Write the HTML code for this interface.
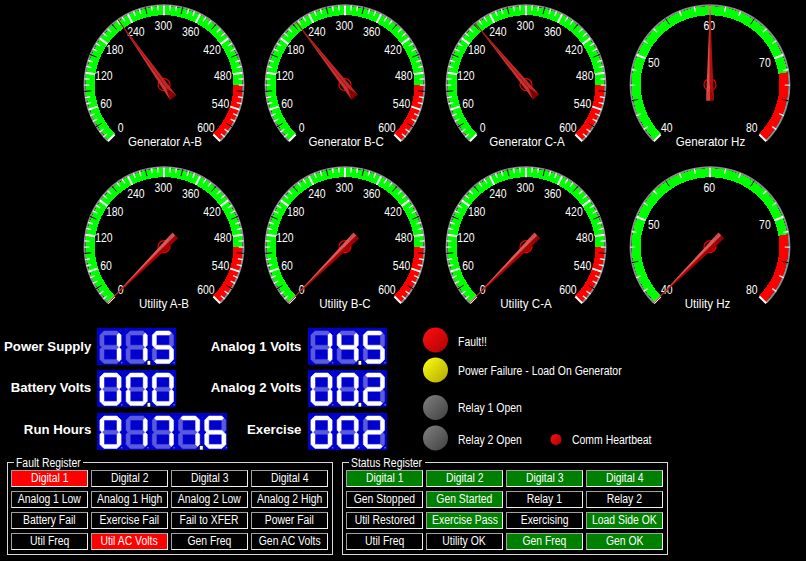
<!DOCTYPE html>
<html><head><meta charset="utf-8"><style>
html,body{margin:0;padding:0;background:#000;}
body{width:806px;height:561px;position:relative;overflow:hidden;font-family:"Liberation Sans", sans-serif;color:#fff;}
.lb{position:absolute;white-space:nowrap;line-height:14px;text-align:right;}
.lb span{display:inline-block;transform:scaleX(1.1);transform-origin:right center;}
.tx{position:absolute;white-space:nowrap;line-height:14px;}
.tx span{display:inline-block;transform:scaleX(0.87);transform-origin:left center;}
.grp{position:absolute;box-sizing:border-box;border:1px solid #d8d8d8;}
.gt{position:absolute;background:#000;padding:0 2px;font-size:12px;line-height:12px;height:12px;white-space:nowrap;width:68px;overflow:visible}
.gt span{display:inline-block;transform:scaleX(0.866);transform-origin:left center;}
.cell{position:absolute;box-sizing:border-box;width:77px;height:17px;border-top:1px solid #a0a0a0;border-left:1px solid #a0a0a0;border-right:1px solid #f0f0f0;border-bottom:1px solid #f0f0f0;text-align:center;font-size:12px;line-height:14px;white-space:nowrap;overflow:visible;}
.cell span{display:inline-block;transform:scaleX(0.866);transform-origin:center center;}
</style></head><body>
<svg width="806" height="561" style="position:absolute;left:0;top:0" font-family="'Liberation Sans', sans-serif" font-size="12" fill="#fff" text-anchor="middle">
<path d="M107.86 140.74 A79.4 79.4 0 1 1 220.14 140.74" fill="none" stroke="#8c8c8c" stroke-width="2.0"/>
<path d="M108.56 140.04 A78.4 78.4 0 1 1 242.4 84.6 L233.4 84.6 A69.4 69.4 0 1 0 114.93 133.67 Z" fill="#00ff00" shape-rendering="crispEdges"/>
<path d="M242.4 84.6 A78.4 78.4 0 0 1 219.44 140.04 L213.07 133.67 A69.4 69.4 0 0 0 233.4 84.6 Z" fill="#ff0000" shape-rendering="crispEdges"/>
<path d="M107.12 133.68L103.32 136.93M103.49 129.07L99.44 132.01M97.35 119.06L92.9 121.33M94.89 113.72L90.27 115.64M91.27 102.56L86.4 103.73M90.12 96.8L85.18 97.58M89.2 85.1L84.2 85.1M89.43 79.23L84.45 78.84M91.27 67.64L86.4 66.47M92.86 61.99L88.11 60.44M97.35 51.14L92.9 48.87M100.22 46.02L95.96 43.4M107.12 36.52L103.32 33.27M111.11 32.21L107.57 28.67M120.03 24.59L117.09 20.54M124.92 21.32L122.3 17.06M135.38 15.99L133.46 11.37M140.89 13.96L139.34 9.21M152.3 11.22L151.52 6.28M158.13 10.53L157.74 5.55M169.87 10.53L170.26 5.55M175.7 11.22L176.48 6.28M187.11 13.96L188.66 9.21M192.62 15.99L194.54 11.37M203.08 21.32L205.7 17.06M207.97 24.59L210.91 20.54M216.89 32.21L220.43 28.67M220.88 36.52L224.68 33.27M227.78 46.02L232.04 43.4M230.65 51.14L235.1 48.87M235.14 61.99L239.89 60.44M236.73 67.64L241.6 66.47M238.57 79.23L243.55 78.84M238.8 85.1L243.8 85.1M237.88 96.8L242.82 97.58M236.73 102.56L241.6 103.73M233.11 113.72L237.73 115.64M230.65 119.06L235.1 121.33M224.51 129.07L228.56 132.01M220.88 133.68L224.68 136.93" stroke="rgba(255,255,255,0.9)" stroke-width="1.4"/>
<path d="M101.76 123.24L95.79 126.9M91.23 90.83L84.25 91.38M96.56 57.16L90.09 54.49M116.59 29.59L112.04 24.27M146.96 14.12L145.32 7.31M181.04 14.12L182.68 7.31M211.41 29.59L215.96 24.27M231.44 57.16L237.91 54.49M236.77 90.83L243.75 91.38M226.24 123.24L232.21 126.9" stroke="#000" stroke-width="1.0"/>
<path d="M114.64 134.46L107.86 141.24M97.62 106.67L88.49 109.64M95.06 74.18L85.58 72.68M107.53 44.07L99.76 38.43M132.31 22.91L127.95 14.35M164 15.3L164 5.7M195.69 22.91L200.05 14.35M220.47 44.07L228.24 38.43M232.94 74.18L242.42 72.68M230.38 106.67L239.51 109.64M213.36 134.46L220.14 141.24" stroke="#fff" stroke-width="2.0"/>
<text transform="translate(120.73 131.93) scale(0.87 1)">0</text>
<text transform="translate(106.05 108.04) scale(0.87 1)">60</text>
<text transform="translate(103.84 80.11) scale(0.87 1)">120</text>
<text transform="translate(114.6 54.23) scale(0.87 1)">180</text>
<text transform="translate(135.97 36.04) scale(0.87 1)">240</text>
<text transform="translate(163.3 29.5) scale(0.87 1)">300</text>
<text transform="translate(190.63 36.04) scale(0.87 1)">360</text>
<text transform="translate(212 54.23) scale(0.87 1)">420</text>
<text transform="translate(222.76 80.11) scale(0.87 1)">480</text>
<text transform="translate(220.55 108.04) scale(0.87 1)">540</text>
<text transform="translate(205.87 131.93) scale(0.87 1)">600</text>
<text x="165" y="145.7" transform="translate(165 0) scale(0.966 1) translate(-165 0)">Generator A-B</text>
<circle cx="164" cy="84.7" r="6" fill="none" stroke="#f00000" stroke-width="1.2"/>
<polygon points="165.73,87.15 173.23,97.77 169.96,100.08" fill="#910000"/>
<polygon points="165.73,87.15 173.23,97.77 176.5,95.46" fill="#880000"/>
<polygon points="117.85,19.36 166.31,87.97 169.96,100.08" fill="#c93434"/>
<polygon points="117.85,19.36 166.31,87.97 176.5,95.46" fill="#c02525"/>
<line x1="164" y1="84.7" x2="117.85" y2="19.36" stroke="#b01414" stroke-width="1"/>
<path d="M288.86 140.74 A79.4 79.4 0 1 1 401.14 140.74" fill="none" stroke="#8c8c8c" stroke-width="2.0"/>
<path d="M289.56 140.04 A78.4 78.4 0 1 1 423.4 84.6 L414.4 84.6 A69.4 69.4 0 1 0 295.93 133.67 Z" fill="#00ff00" shape-rendering="crispEdges"/>
<path d="M423.4 84.6 A78.4 78.4 0 0 1 400.44 140.04 L394.07 133.67 A69.4 69.4 0 0 0 414.4 84.6 Z" fill="#ff0000" shape-rendering="crispEdges"/>
<path d="M288.12 133.68L284.32 136.93M284.49 129.07L280.44 132.01M278.35 119.06L273.9 121.33M275.89 113.72L271.27 115.64M272.27 102.56L267.4 103.73M271.12 96.8L266.18 97.58M270.2 85.1L265.2 85.1M270.43 79.23L265.45 78.84M272.27 67.64L267.4 66.47M273.86 61.99L269.11 60.44M278.35 51.14L273.9 48.87M281.22 46.02L276.96 43.4M288.12 36.52L284.32 33.27M292.11 32.21L288.57 28.67M301.03 24.59L298.09 20.54M305.92 21.32L303.3 17.06M316.38 15.99L314.46 11.37M321.89 13.96L320.34 9.21M333.3 11.22L332.52 6.28M339.13 10.53L338.74 5.55M350.87 10.53L351.26 5.55M356.7 11.22L357.48 6.28M368.11 13.96L369.66 9.21M373.62 15.99L375.54 11.37M384.08 21.32L386.7 17.06M388.97 24.59L391.91 20.54M397.89 32.21L401.43 28.67M401.88 36.52L405.68 33.27M408.78 46.02L413.04 43.4M411.65 51.14L416.1 48.87M416.14 61.99L420.89 60.44M417.73 67.64L422.6 66.47M419.57 79.23L424.55 78.84M419.8 85.1L424.8 85.1M418.88 96.8L423.82 97.58M417.73 102.56L422.6 103.73M414.11 113.72L418.73 115.64M411.65 119.06L416.1 121.33M405.51 129.07L409.56 132.01M401.88 133.68L405.68 136.93" stroke="rgba(255,255,255,0.9)" stroke-width="1.4"/>
<path d="M282.76 123.24L276.79 126.9M272.23 90.83L265.25 91.38M277.56 57.16L271.09 54.49M297.59 29.59L293.04 24.27M327.96 14.12L326.32 7.31M362.04 14.12L363.68 7.31M392.41 29.59L396.96 24.27M412.44 57.16L418.91 54.49M417.77 90.83L424.75 91.38M407.24 123.24L413.21 126.9" stroke="#000" stroke-width="1.0"/>
<path d="M295.64 134.46L288.86 141.24M278.62 106.67L269.49 109.64M276.06 74.18L266.58 72.68M288.53 44.07L280.76 38.43M313.31 22.91L308.95 14.35M345 15.3L345 5.7M376.69 22.91L381.05 14.35M401.47 44.07L409.24 38.43M413.94 74.18L423.42 72.68M411.38 106.67L420.51 109.64M394.36 134.46L401.14 141.24" stroke="#fff" stroke-width="2.0"/>
<text transform="translate(301.73 131.93) scale(0.87 1)">0</text>
<text transform="translate(287.05 108.04) scale(0.87 1)">60</text>
<text transform="translate(284.84 80.11) scale(0.87 1)">120</text>
<text transform="translate(295.6 54.23) scale(0.87 1)">180</text>
<text transform="translate(316.97 36.04) scale(0.87 1)">240</text>
<text transform="translate(344.3 29.5) scale(0.87 1)">300</text>
<text transform="translate(371.63 36.04) scale(0.87 1)">360</text>
<text transform="translate(393 54.23) scale(0.87 1)">420</text>
<text transform="translate(403.76 80.11) scale(0.87 1)">480</text>
<text transform="translate(401.55 108.04) scale(0.87 1)">540</text>
<text transform="translate(386.87 131.93) scale(0.87 1)">600</text>
<text x="346.2" y="145.7" transform="translate(346.2 0) scale(0.966 1) translate(-346.2 0)">Generator B-C</text>
<circle cx="345" cy="84.7" r="6" fill="none" stroke="#f00000" stroke-width="1.2"/>
<polygon points="346.84,87.07 354.84,97.32 351.68,99.78" fill="#8f0000"/>
<polygon points="346.84,87.07 354.84,97.32 357.99,94.86" fill="#880000"/>
<polygon points="295.82,21.6 347.46,87.85 351.68,99.78" fill="#c83232"/>
<polygon points="295.82,21.6 347.46,87.85 357.99,94.86" fill="#c12727"/>
<line x1="345" y1="84.7" x2="295.82" y2="21.6" stroke="#b01414" stroke-width="1"/>
<path d="M469.86 140.74 A79.4 79.4 0 1 1 582.14 140.74" fill="none" stroke="#8c8c8c" stroke-width="2.0"/>
<path d="M470.56 140.04 A78.4 78.4 0 1 1 604.4 84.6 L595.4 84.6 A69.4 69.4 0 1 0 476.93 133.67 Z" fill="#00ff00" shape-rendering="crispEdges"/>
<path d="M604.4 84.6 A78.4 78.4 0 0 1 581.44 140.04 L575.07 133.67 A69.4 69.4 0 0 0 595.4 84.6 Z" fill="#ff0000" shape-rendering="crispEdges"/>
<path d="M469.12 133.68L465.32 136.93M465.49 129.07L461.44 132.01M459.35 119.06L454.9 121.33M456.89 113.72L452.27 115.64M453.27 102.56L448.4 103.73M452.12 96.8L447.18 97.58M451.2 85.1L446.2 85.1M451.43 79.23L446.45 78.84M453.27 67.64L448.4 66.47M454.86 61.99L450.11 60.44M459.35 51.14L454.9 48.87M462.22 46.02L457.96 43.4M469.12 36.52L465.32 33.27M473.11 32.21L469.57 28.67M482.03 24.59L479.09 20.54M486.92 21.32L484.3 17.06M497.38 15.99L495.46 11.37M502.89 13.96L501.34 9.21M514.3 11.22L513.52 6.28M520.13 10.53L519.74 5.55M531.87 10.53L532.26 5.55M537.7 11.22L538.48 6.28M549.11 13.96L550.66 9.21M554.62 15.99L556.54 11.37M565.08 21.32L567.7 17.06M569.97 24.59L572.91 20.54M578.89 32.21L582.43 28.67M582.88 36.52L586.68 33.27M589.78 46.02L594.04 43.4M592.65 51.14L597.1 48.87M597.14 61.99L601.89 60.44M598.73 67.64L603.6 66.47M600.57 79.23L605.55 78.84M600.8 85.1L605.8 85.1M599.88 96.8L604.82 97.58M598.73 102.56L603.6 103.73M595.11 113.72L599.73 115.64M592.65 119.06L597.1 121.33M586.51 129.07L590.56 132.01M582.88 133.68L586.68 136.93" stroke="rgba(255,255,255,0.9)" stroke-width="1.4"/>
<path d="M463.76 123.24L457.79 126.9M453.23 90.83L446.25 91.38M458.56 57.16L452.09 54.49M478.59 29.59L474.04 24.27M508.96 14.12L507.32 7.31M543.04 14.12L544.68 7.31M573.41 29.59L577.96 24.27M593.44 57.16L599.91 54.49M598.77 90.83L605.75 91.38M588.24 123.24L594.21 126.9" stroke="#000" stroke-width="1.0"/>
<path d="M476.64 134.46L469.86 141.24M459.62 106.67L450.49 109.64M457.06 74.18L447.58 72.68M469.53 44.07L461.76 38.43M494.31 22.91L489.95 14.35M526 15.3L526 5.7M557.69 22.91L562.05 14.35M582.47 44.07L590.24 38.43M594.94 74.18L604.42 72.68M592.38 106.67L601.51 109.64M575.36 134.46L582.14 141.24" stroke="#fff" stroke-width="2.0"/>
<text transform="translate(482.73 131.93) scale(0.87 1)">0</text>
<text transform="translate(468.05 108.04) scale(0.87 1)">60</text>
<text transform="translate(465.84 80.11) scale(0.87 1)">120</text>
<text transform="translate(476.6 54.23) scale(0.87 1)">180</text>
<text transform="translate(497.97 36.04) scale(0.87 1)">240</text>
<text transform="translate(525.3 29.5) scale(0.87 1)">300</text>
<text transform="translate(552.63 36.04) scale(0.87 1)">360</text>
<text transform="translate(574 54.23) scale(0.87 1)">420</text>
<text transform="translate(584.76 80.11) scale(0.87 1)">480</text>
<text transform="translate(582.55 108.04) scale(0.87 1)">540</text>
<text transform="translate(567.87 131.93) scale(0.87 1)">600</text>
<text x="527" y="145.7" transform="translate(527 0) scale(0.966 1) translate(-527 0)">Generator C-A</text>
<circle cx="526" cy="84.7" r="6" fill="none" stroke="#f00000" stroke-width="1.2"/>
<polygon points="527.91,87.01 536.2,97.03 533.12,99.58" fill="#8e0000"/>
<polygon points="527.91,87.01 536.2,97.03 539.28,94.48" fill="#890000"/>
<polygon points="475.01,23.06 528.55,87.78 533.12,99.58" fill="#c73131"/>
<polygon points="475.01,23.06 528.55,87.78 539.28,94.48" fill="#c22828"/>
<line x1="526" y1="84.7" x2="475.01" y2="23.06" stroke="#b01414" stroke-width="1"/>
<path d="M653.86 140.74 A79.4 79.4 0 1 1 766.14 140.74" fill="none" stroke="#8c8c8c" stroke-width="2.0"/>
<path d="M654.56 140.04 A78.4 78.4 0 1 1 787.43 72.34 L778.55 73.74 A69.4 69.4 0 1 0 660.93 133.67 Z" fill="#00ff00" shape-rendering="crispEdges"/>
<path d="M787.43 72.34 A78.4 78.4 0 0 1 765.44 140.04 L759.07 133.67 A69.4 69.4 0 0 0 778.55 73.74 Z" fill="#ff0000" shape-rendering="crispEdges"/>
<path d="M647.81 126.66L643.65 129.43M640.89 113.72L636.27 115.64M635.2 85.1L630.2 85.1M636.64 70.51L631.73 69.53M647.81 43.54L643.65 40.77M657.11 32.21L653.57 28.67M681.38 15.99L679.46 11.37M695.41 11.74L694.43 6.83M724.59 11.74L725.57 6.83M738.62 15.99L740.54 11.37M762.89 32.21L766.43 28.67M772.19 43.54L776.35 40.77M783.36 70.51L788.27 69.53M784.8 85.1L789.8 85.1M779.11 113.72L783.73 115.64M772.19 126.66L776.35 129.43" stroke="rgba(255,255,255,0.9)" stroke-width="1.4"/>
<path d="M638.4 99.34L631.54 100.71M669.44 24.4L665.55 18.58M750.56 24.4L754.45 18.58M781.6 99.34L788.46 100.71" stroke="#000" stroke-width="1.0"/>
<path d="M660.64 134.46L653.86 141.24M645.51 58.39L636.64 54.71M710 15.3L710 5.7M774.49 58.39L783.36 54.71M759.36 134.46L766.14 141.24" stroke="#fff" stroke-width="2.0"/>
<text transform="translate(666.73 131.93) scale(0.87 1)">40</text>
<text transform="translate(653.68 66.54) scale(0.87 1)">50</text>
<text transform="translate(709.3 29.5) scale(0.87 1)">60</text>
<text transform="translate(764.92 66.54) scale(0.87 1)">70</text>
<text transform="translate(751.87 131.93) scale(0.87 1)">80</text>
<text x="710.5" y="145.7" transform="translate(710.5 0) scale(0.966 1) translate(-710.5 0)">Generator Hz</text>
<circle cx="710" cy="84.7" r="6" fill="none" stroke="#f00000" stroke-width="1.2"/>
<polygon points="710,87.7 710,100.7 706,100.7" fill="#ce4343"/>
<polygon points="710,87.7 710,100.7 714,100.7" fill="#a80303"/>
<polygon points="710,4.7 710,88.7 706,100.7" fill="#d84c4c"/>
<polygon points="710,4.7 710,88.7 714,100.7" fill="#b10d0d"/>
<line x1="710" y1="84.7" x2="710" y2="4.7" stroke="#b01414" stroke-width="1"/>
<path d="M107.86 302.74 A79.4 79.4 0 1 1 220.14 302.74" fill="none" stroke="#8c8c8c" stroke-width="2.0"/>
<path d="M108.56 302.04 A78.4 78.4 0 1 1 242.4 246.6 L233.4 246.6 A69.4 69.4 0 1 0 114.93 295.67 Z" fill="#00ff00" shape-rendering="crispEdges"/>
<path d="M242.4 246.6 A78.4 78.4 0 0 1 219.44 302.04 L213.07 295.67 A69.4 69.4 0 0 0 233.4 246.6 Z" fill="#ff0000" shape-rendering="crispEdges"/>
<path d="M107.12 295.68L103.32 298.93M103.49 291.07L99.44 294.01M97.35 281.06L92.9 283.33M94.89 275.72L90.27 277.64M91.27 264.56L86.4 265.73M90.12 258.8L85.18 259.58M89.2 247.1L84.2 247.1M89.43 241.23L84.45 240.84M91.27 229.64L86.4 228.47M92.86 223.99L88.11 222.44M97.35 213.14L92.9 210.87M100.22 208.02L95.96 205.4M107.12 198.52L103.32 195.27M111.11 194.21L107.57 190.67M120.03 186.59L117.09 182.54M124.92 183.32L122.3 179.06M135.38 177.99L133.46 173.37M140.89 175.96L139.34 171.21M152.3 173.22L151.52 168.28M158.13 172.53L157.74 167.55M169.87 172.53L170.26 167.55M175.7 173.22L176.48 168.28M187.11 175.96L188.66 171.21M192.62 177.99L194.54 173.37M203.08 183.32L205.7 179.06M207.97 186.59L210.91 182.54M216.89 194.21L220.43 190.67M220.88 198.52L224.68 195.27M227.78 208.02L232.04 205.4M230.65 213.14L235.1 210.87M235.14 223.99L239.89 222.44M236.73 229.64L241.6 228.47M238.57 241.23L243.55 240.84M238.8 247.1L243.8 247.1M237.88 258.8L242.82 259.58M236.73 264.56L241.6 265.73M233.11 275.72L237.73 277.64M230.65 281.06L235.1 283.33M224.51 291.07L228.56 294.01M220.88 295.68L224.68 298.93" stroke="rgba(255,255,255,0.9)" stroke-width="1.4"/>
<path d="M101.76 285.24L95.79 288.9M91.23 252.83L84.25 253.38M96.56 219.16L90.09 216.49M116.59 191.59L112.04 186.27M146.96 176.12L145.32 169.31M181.04 176.12L182.68 169.31M211.41 191.59L215.96 186.27M231.44 219.16L237.91 216.49M236.77 252.83L243.75 253.38M226.24 285.24L232.21 288.9" stroke="#000" stroke-width="1.0"/>
<path d="M114.64 296.46L107.86 303.24M97.62 268.67L88.49 271.64M95.06 236.18L85.58 234.68M107.53 206.07L99.76 200.43M132.31 184.91L127.95 176.35M164 177.3L164 167.7M195.69 184.91L200.05 176.35M220.47 206.07L228.24 200.43M232.94 236.18L242.42 234.68M230.38 268.67L239.51 271.64M213.36 296.46L220.14 303.24" stroke="#fff" stroke-width="2.0"/>
<text transform="translate(120.73 293.93) scale(0.87 1)">0</text>
<text transform="translate(106.05 270.04) scale(0.87 1)">60</text>
<text transform="translate(103.84 242.11) scale(0.87 1)">120</text>
<text transform="translate(114.6 216.23) scale(0.87 1)">180</text>
<text transform="translate(135.97 198.04) scale(0.87 1)">240</text>
<text transform="translate(163.3 191.5) scale(0.87 1)">300</text>
<text transform="translate(190.63 198.04) scale(0.87 1)">360</text>
<text transform="translate(212 216.23) scale(0.87 1)">420</text>
<text transform="translate(222.76 242.11) scale(0.87 1)">480</text>
<text transform="translate(220.55 270.04) scale(0.87 1)">540</text>
<text transform="translate(205.87 293.93) scale(0.87 1)">600</text>
<text x="164" y="307.7" transform="translate(164 0) scale(0.966 1) translate(-164 0)">Utility A-B</text>
<path d="M159.76 250.94 A6 6 0 0 0 168.24 242.46 Z" fill="#9c0000"/>
<circle cx="164" cy="246.7" r="6" fill="none" stroke="#f00000" stroke-width="1.2"/>
<polygon points="166.12,244.58 175.31,235.39 178.14,238.21" fill="#a20000"/>
<polygon points="166.12,244.58 175.31,235.39 172.49,232.56" fill="#d75151"/>
<polygon points="107.43,303.27 166.83,243.87 178.14,238.21" fill="#aa0000"/>
<polygon points="107.43,303.27 166.83,243.87 172.49,232.56" fill="#df5959"/>
<line x1="164" y1="246.7" x2="107.43" y2="303.27" stroke="#b01414" stroke-width="1"/>
<path d="M288.86 302.74 A79.4 79.4 0 1 1 401.14 302.74" fill="none" stroke="#8c8c8c" stroke-width="2.0"/>
<path d="M289.56 302.04 A78.4 78.4 0 1 1 423.4 246.6 L414.4 246.6 A69.4 69.4 0 1 0 295.93 295.67 Z" fill="#00ff00" shape-rendering="crispEdges"/>
<path d="M423.4 246.6 A78.4 78.4 0 0 1 400.44 302.04 L394.07 295.67 A69.4 69.4 0 0 0 414.4 246.6 Z" fill="#ff0000" shape-rendering="crispEdges"/>
<path d="M288.12 295.68L284.32 298.93M284.49 291.07L280.44 294.01M278.35 281.06L273.9 283.33M275.89 275.72L271.27 277.64M272.27 264.56L267.4 265.73M271.12 258.8L266.18 259.58M270.2 247.1L265.2 247.1M270.43 241.23L265.45 240.84M272.27 229.64L267.4 228.47M273.86 223.99L269.11 222.44M278.35 213.14L273.9 210.87M281.22 208.02L276.96 205.4M288.12 198.52L284.32 195.27M292.11 194.21L288.57 190.67M301.03 186.59L298.09 182.54M305.92 183.32L303.3 179.06M316.38 177.99L314.46 173.37M321.89 175.96L320.34 171.21M333.3 173.22L332.52 168.28M339.13 172.53L338.74 167.55M350.87 172.53L351.26 167.55M356.7 173.22L357.48 168.28M368.11 175.96L369.66 171.21M373.62 177.99L375.54 173.37M384.08 183.32L386.7 179.06M388.97 186.59L391.91 182.54M397.89 194.21L401.43 190.67M401.88 198.52L405.68 195.27M408.78 208.02L413.04 205.4M411.65 213.14L416.1 210.87M416.14 223.99L420.89 222.44M417.73 229.64L422.6 228.47M419.57 241.23L424.55 240.84M419.8 247.1L424.8 247.1M418.88 258.8L423.82 259.58M417.73 264.56L422.6 265.73M414.11 275.72L418.73 277.64M411.65 281.06L416.1 283.33M405.51 291.07L409.56 294.01M401.88 295.68L405.68 298.93" stroke="rgba(255,255,255,0.9)" stroke-width="1.4"/>
<path d="M282.76 285.24L276.79 288.9M272.23 252.83L265.25 253.38M277.56 219.16L271.09 216.49M297.59 191.59L293.04 186.27M327.96 176.12L326.32 169.31M362.04 176.12L363.68 169.31M392.41 191.59L396.96 186.27M412.44 219.16L418.91 216.49M417.77 252.83L424.75 253.38M407.24 285.24L413.21 288.9" stroke="#000" stroke-width="1.0"/>
<path d="M295.64 296.46L288.86 303.24M278.62 268.67L269.49 271.64M276.06 236.18L266.58 234.68M288.53 206.07L280.76 200.43M313.31 184.91L308.95 176.35M345 177.3L345 167.7M376.69 184.91L381.05 176.35M401.47 206.07L409.24 200.43M413.94 236.18L423.42 234.68M411.38 268.67L420.51 271.64M394.36 296.46L401.14 303.24" stroke="#fff" stroke-width="2.0"/>
<text transform="translate(301.73 293.93) scale(0.87 1)">0</text>
<text transform="translate(287.05 270.04) scale(0.87 1)">60</text>
<text transform="translate(284.84 242.11) scale(0.87 1)">120</text>
<text transform="translate(295.6 216.23) scale(0.87 1)">180</text>
<text transform="translate(316.97 198.04) scale(0.87 1)">240</text>
<text transform="translate(344.3 191.5) scale(0.87 1)">300</text>
<text transform="translate(371.63 198.04) scale(0.87 1)">360</text>
<text transform="translate(393 216.23) scale(0.87 1)">420</text>
<text transform="translate(403.76 242.11) scale(0.87 1)">480</text>
<text transform="translate(401.55 270.04) scale(0.87 1)">540</text>
<text transform="translate(386.87 293.93) scale(0.87 1)">600</text>
<text x="345" y="307.7" transform="translate(345 0) scale(0.966 1) translate(-345 0)">Utility B-C</text>
<path d="M340.76 250.94 A6 6 0 0 0 349.24 242.46 Z" fill="#9c0000"/>
<circle cx="345" cy="246.7" r="6" fill="none" stroke="#f00000" stroke-width="1.2"/>
<polygon points="347.12,244.58 356.31,235.39 359.14,238.21" fill="#a20000"/>
<polygon points="347.12,244.58 356.31,235.39 353.49,232.56" fill="#d75151"/>
<polygon points="288.43,303.27 347.83,243.87 359.14,238.21" fill="#aa0000"/>
<polygon points="288.43,303.27 347.83,243.87 353.49,232.56" fill="#df5959"/>
<line x1="345" y1="246.7" x2="288.43" y2="303.27" stroke="#b01414" stroke-width="1"/>
<path d="M469.86 302.74 A79.4 79.4 0 1 1 582.14 302.74" fill="none" stroke="#8c8c8c" stroke-width="2.0"/>
<path d="M470.56 302.04 A78.4 78.4 0 1 1 604.4 246.6 L595.4 246.6 A69.4 69.4 0 1 0 476.93 295.67 Z" fill="#00ff00" shape-rendering="crispEdges"/>
<path d="M604.4 246.6 A78.4 78.4 0 0 1 581.44 302.04 L575.07 295.67 A69.4 69.4 0 0 0 595.4 246.6 Z" fill="#ff0000" shape-rendering="crispEdges"/>
<path d="M469.12 295.68L465.32 298.93M465.49 291.07L461.44 294.01M459.35 281.06L454.9 283.33M456.89 275.72L452.27 277.64M453.27 264.56L448.4 265.73M452.12 258.8L447.18 259.58M451.2 247.1L446.2 247.1M451.43 241.23L446.45 240.84M453.27 229.64L448.4 228.47M454.86 223.99L450.11 222.44M459.35 213.14L454.9 210.87M462.22 208.02L457.96 205.4M469.12 198.52L465.32 195.27M473.11 194.21L469.57 190.67M482.03 186.59L479.09 182.54M486.92 183.32L484.3 179.06M497.38 177.99L495.46 173.37M502.89 175.96L501.34 171.21M514.3 173.22L513.52 168.28M520.13 172.53L519.74 167.55M531.87 172.53L532.26 167.55M537.7 173.22L538.48 168.28M549.11 175.96L550.66 171.21M554.62 177.99L556.54 173.37M565.08 183.32L567.7 179.06M569.97 186.59L572.91 182.54M578.89 194.21L582.43 190.67M582.88 198.52L586.68 195.27M589.78 208.02L594.04 205.4M592.65 213.14L597.1 210.87M597.14 223.99L601.89 222.44M598.73 229.64L603.6 228.47M600.57 241.23L605.55 240.84M600.8 247.1L605.8 247.1M599.88 258.8L604.82 259.58M598.73 264.56L603.6 265.73M595.11 275.72L599.73 277.64M592.65 281.06L597.1 283.33M586.51 291.07L590.56 294.01M582.88 295.68L586.68 298.93" stroke="rgba(255,255,255,0.9)" stroke-width="1.4"/>
<path d="M463.76 285.24L457.79 288.9M453.23 252.83L446.25 253.38M458.56 219.16L452.09 216.49M478.59 191.59L474.04 186.27M508.96 176.12L507.32 169.31M543.04 176.12L544.68 169.31M573.41 191.59L577.96 186.27M593.44 219.16L599.91 216.49M598.77 252.83L605.75 253.38M588.24 285.24L594.21 288.9" stroke="#000" stroke-width="1.0"/>
<path d="M476.64 296.46L469.86 303.24M459.62 268.67L450.49 271.64M457.06 236.18L447.58 234.68M469.53 206.07L461.76 200.43M494.31 184.91L489.95 176.35M526 177.3L526 167.7M557.69 184.91L562.05 176.35M582.47 206.07L590.24 200.43M594.94 236.18L604.42 234.68M592.38 268.67L601.51 271.64M575.36 296.46L582.14 303.24" stroke="#fff" stroke-width="2.0"/>
<text transform="translate(482.73 293.93) scale(0.87 1)">0</text>
<text transform="translate(468.05 270.04) scale(0.87 1)">60</text>
<text transform="translate(465.84 242.11) scale(0.87 1)">120</text>
<text transform="translate(476.6 216.23) scale(0.87 1)">180</text>
<text transform="translate(497.97 198.04) scale(0.87 1)">240</text>
<text transform="translate(525.3 191.5) scale(0.87 1)">300</text>
<text transform="translate(552.63 198.04) scale(0.87 1)">360</text>
<text transform="translate(574 216.23) scale(0.87 1)">420</text>
<text transform="translate(584.76 242.11) scale(0.87 1)">480</text>
<text transform="translate(582.55 270.04) scale(0.87 1)">540</text>
<text transform="translate(567.87 293.93) scale(0.87 1)">600</text>
<text x="526" y="307.7" transform="translate(526 0) scale(0.966 1) translate(-526 0)">Utility C-A</text>
<path d="M521.76 250.94 A6 6 0 0 0 530.24 242.46 Z" fill="#9c0000"/>
<circle cx="526" cy="246.7" r="6" fill="none" stroke="#f00000" stroke-width="1.2"/>
<polygon points="528.12,244.58 537.31,235.39 540.14,238.21" fill="#a20000"/>
<polygon points="528.12,244.58 537.31,235.39 534.49,232.56" fill="#d75151"/>
<polygon points="469.43,303.27 528.83,243.87 540.14,238.21" fill="#aa0000"/>
<polygon points="469.43,303.27 528.83,243.87 534.49,232.56" fill="#df5959"/>
<line x1="526" y1="246.7" x2="469.43" y2="303.27" stroke="#b01414" stroke-width="1"/>
<path d="M653.86 302.74 A79.4 79.4 0 1 1 766.14 302.74" fill="none" stroke="#8c8c8c" stroke-width="2.0"/>
<path d="M654.56 302.04 A78.4 78.4 0 1 1 787.43 234.34 L778.55 235.74 A69.4 69.4 0 1 0 660.93 295.67 Z" fill="#00ff00" shape-rendering="crispEdges"/>
<path d="M787.43 234.34 A78.4 78.4 0 0 1 765.44 302.04 L759.07 295.67 A69.4 69.4 0 0 0 778.55 235.74 Z" fill="#ff0000" shape-rendering="crispEdges"/>
<path d="M647.81 288.66L643.65 291.43M640.89 275.72L636.27 277.64M635.2 247.1L630.2 247.1M636.64 232.51L631.73 231.53M647.81 205.54L643.65 202.77M657.11 194.21L653.57 190.67M681.38 177.99L679.46 173.37M695.41 173.74L694.43 168.83M724.59 173.74L725.57 168.83M738.62 177.99L740.54 173.37M762.89 194.21L766.43 190.67M772.19 205.54L776.35 202.77M783.36 232.51L788.27 231.53M784.8 247.1L789.8 247.1M779.11 275.72L783.73 277.64M772.19 288.66L776.35 291.43" stroke="rgba(255,255,255,0.9)" stroke-width="1.4"/>
<path d="M638.4 261.34L631.54 262.71M669.44 186.4L665.55 180.58M750.56 186.4L754.45 180.58M781.6 261.34L788.46 262.71" stroke="#000" stroke-width="1.0"/>
<path d="M660.64 296.46L653.86 303.24M645.51 220.39L636.64 216.71M710 177.3L710 167.7M774.49 220.39L783.36 216.71M759.36 296.46L766.14 303.24" stroke="#fff" stroke-width="2.0"/>
<text transform="translate(666.73 293.93) scale(0.87 1)">40</text>
<text transform="translate(653.68 228.54) scale(0.87 1)">50</text>
<text transform="translate(709.3 191.5) scale(0.87 1)">60</text>
<text transform="translate(764.92 228.54) scale(0.87 1)">70</text>
<text transform="translate(751.87 293.93) scale(0.87 1)">80</text>
<text x="707.5" y="307.7" transform="translate(707.5 0) scale(0.966 1) translate(-707.5 0)">Utility Hz</text>
<path d="M705.76 250.94 A6 6 0 0 0 714.24 242.46 Z" fill="#9c0000"/>
<circle cx="710" cy="246.7" r="6" fill="none" stroke="#f00000" stroke-width="1.2"/>
<polygon points="712.12,244.58 721.31,235.39 724.14,238.21" fill="#a20000"/>
<polygon points="712.12,244.58 721.31,235.39 718.49,232.56" fill="#d75151"/>
<polygon points="653.43,303.27 712.83,243.87 724.14,238.21" fill="#aa0000"/>
<polygon points="653.43,303.27 712.83,243.87 718.49,232.56" fill="#df5959"/>
<line x1="710" y1="246.7" x2="653.43" y2="303.27" stroke="#b01414" stroke-width="1"/>
<rect x="97" y="328" width="79" height="37" fill="#0000cd"/>
<polygon points="101.95,333.05 104,331 117,331 119.05,333.05 117,335.1 104,335.1" fill="#5a5ade" stroke="#5a5ade" stroke-width="0.5"/>
<polygon points="101.95,361.45 104,359.4 117,359.4 119.05,361.45 117,363.5 104,363.5" fill="#5a5ade" stroke="#5a5ade" stroke-width="0.5"/>
<polygon points="101.95,347.25 104,349.3 104,359.4 101.95,361.45 99.9,359.4 99.9,349.3" fill="#5a5ade" stroke="#5a5ade" stroke-width="0.5"/>
<polygon points="101.95,333.05 104,335.1 104,345.2 101.95,347.25 99.9,345.2 99.9,335.1" fill="#5a5ade" stroke="#5a5ade" stroke-width="0.5"/>
<polygon points="101.95,347.25 104,345.2 117,345.2 119.05,347.25 117,349.3 104,349.3" fill="#5a5ade" stroke="#5a5ade" stroke-width="0.5"/>
<polygon points="119.05,333.05 121.1,335.1 121.1,345.2 119.05,347.25 117,345.2 117,335.1" fill="#fff" stroke="#fff" stroke-width="0.5"/>
<polygon points="119.05,347.25 121.1,349.3 121.1,359.4 119.05,361.45 117,359.4 117,349.3" fill="#fff" stroke="#fff" stroke-width="0.5"/>
<circle cx="121.7" cy="362.7" r="0.9" fill="#5a5ade"/>
<polygon points="128.15,333.05 130.2,331 143.2,331 145.25,333.05 143.2,335.1 130.2,335.1" fill="#5a5ade" stroke="#5a5ade" stroke-width="0.5"/>
<polygon points="128.15,361.45 130.2,359.4 143.2,359.4 145.25,361.45 143.2,363.5 130.2,363.5" fill="#5a5ade" stroke="#5a5ade" stroke-width="0.5"/>
<polygon points="128.15,347.25 130.2,349.3 130.2,359.4 128.15,361.45 126.1,359.4 126.1,349.3" fill="#5a5ade" stroke="#5a5ade" stroke-width="0.5"/>
<polygon points="128.15,333.05 130.2,335.1 130.2,345.2 128.15,347.25 126.1,345.2 126.1,335.1" fill="#5a5ade" stroke="#5a5ade" stroke-width="0.5"/>
<polygon points="128.15,347.25 130.2,345.2 143.2,345.2 145.25,347.25 143.2,349.3 130.2,349.3" fill="#5a5ade" stroke="#5a5ade" stroke-width="0.5"/>
<polygon points="145.25,333.05 147.3,335.1 147.3,345.2 145.25,347.25 143.2,345.2 143.2,335.1" fill="#fff" stroke="#fff" stroke-width="0.5"/>
<polygon points="145.25,347.25 147.3,349.3 147.3,359.4 145.25,361.45 143.2,359.4 143.2,349.3" fill="#fff" stroke="#fff" stroke-width="0.5"/>
<rect x="147.1" y="360.6" width="3.6" height="4.4" fill="#fff" stroke="#000" stroke-width="0.6"/>
<polygon points="171.45,333.05 173.5,335.1 173.5,345.2 171.45,347.25 169.4,345.2 169.4,335.1" fill="#5a5ade" stroke="#5a5ade" stroke-width="0.5"/>
<polygon points="154.35,347.25 156.4,349.3 156.4,359.4 154.35,361.45 152.3,359.4 152.3,349.3" fill="#5a5ade" stroke="#5a5ade" stroke-width="0.5"/>
<polygon points="154.35,333.05 156.4,331 169.4,331 171.45,333.05 169.4,335.1 156.4,335.1" fill="#fff" stroke="#fff" stroke-width="0.5"/>
<polygon points="171.45,347.25 173.5,349.3 173.5,359.4 171.45,361.45 169.4,359.4 169.4,349.3" fill="#fff" stroke="#fff" stroke-width="0.5"/>
<polygon points="154.35,361.45 156.4,359.4 169.4,359.4 171.45,361.45 169.4,363.5 156.4,363.5" fill="#fff" stroke="#fff" stroke-width="0.5"/>
<polygon points="154.35,333.05 156.4,335.1 156.4,345.2 154.35,347.25 152.3,345.2 152.3,335.1" fill="#fff" stroke="#fff" stroke-width="0.5"/>
<polygon points="154.35,347.25 156.4,345.2 169.4,345.2 171.45,347.25 169.4,349.3 156.4,349.3" fill="#fff" stroke="#fff" stroke-width="0.5"/>
<circle cx="174.1" cy="362.7" r="0.9" fill="#5a5ade"/>
<rect x="97" y="370" width="79" height="37" fill="#0000cd"/>
<polygon points="101.95,389.25 104,387.2 117,387.2 119.05,389.25 117,391.3 104,391.3" fill="#5a5ade" stroke="#5a5ade" stroke-width="0.5"/>
<polygon points="101.95,375.05 104,373 117,373 119.05,375.05 117,377.1 104,377.1" fill="#fff" stroke="#fff" stroke-width="0.5"/>
<polygon points="119.05,375.05 121.1,377.1 121.1,387.2 119.05,389.25 117,387.2 117,377.1" fill="#fff" stroke="#fff" stroke-width="0.5"/>
<polygon points="119.05,389.25 121.1,391.3 121.1,401.4 119.05,403.45 117,401.4 117,391.3" fill="#fff" stroke="#fff" stroke-width="0.5"/>
<polygon points="101.95,403.45 104,401.4 117,401.4 119.05,403.45 117,405.5 104,405.5" fill="#fff" stroke="#fff" stroke-width="0.5"/>
<polygon points="101.95,389.25 104,391.3 104,401.4 101.95,403.45 99.9,401.4 99.9,391.3" fill="#fff" stroke="#fff" stroke-width="0.5"/>
<polygon points="101.95,375.05 104,377.1 104,387.2 101.95,389.25 99.9,387.2 99.9,377.1" fill="#fff" stroke="#fff" stroke-width="0.5"/>
<circle cx="121.7" cy="404.7" r="0.9" fill="#5a5ade"/>
<polygon points="128.15,389.25 130.2,387.2 143.2,387.2 145.25,389.25 143.2,391.3 130.2,391.3" fill="#5a5ade" stroke="#5a5ade" stroke-width="0.5"/>
<polygon points="128.15,375.05 130.2,373 143.2,373 145.25,375.05 143.2,377.1 130.2,377.1" fill="#fff" stroke="#fff" stroke-width="0.5"/>
<polygon points="145.25,375.05 147.3,377.1 147.3,387.2 145.25,389.25 143.2,387.2 143.2,377.1" fill="#fff" stroke="#fff" stroke-width="0.5"/>
<polygon points="145.25,389.25 147.3,391.3 147.3,401.4 145.25,403.45 143.2,401.4 143.2,391.3" fill="#fff" stroke="#fff" stroke-width="0.5"/>
<polygon points="128.15,403.45 130.2,401.4 143.2,401.4 145.25,403.45 143.2,405.5 130.2,405.5" fill="#fff" stroke="#fff" stroke-width="0.5"/>
<polygon points="128.15,389.25 130.2,391.3 130.2,401.4 128.15,403.45 126.1,401.4 126.1,391.3" fill="#fff" stroke="#fff" stroke-width="0.5"/>
<polygon points="128.15,375.05 130.2,377.1 130.2,387.2 128.15,389.25 126.1,387.2 126.1,377.1" fill="#fff" stroke="#fff" stroke-width="0.5"/>
<rect x="147.1" y="402.6" width="3.6" height="4.4" fill="#fff" stroke="#000" stroke-width="0.6"/>
<polygon points="154.35,389.25 156.4,387.2 169.4,387.2 171.45,389.25 169.4,391.3 156.4,391.3" fill="#5a5ade" stroke="#5a5ade" stroke-width="0.5"/>
<polygon points="154.35,375.05 156.4,373 169.4,373 171.45,375.05 169.4,377.1 156.4,377.1" fill="#fff" stroke="#fff" stroke-width="0.5"/>
<polygon points="171.45,375.05 173.5,377.1 173.5,387.2 171.45,389.25 169.4,387.2 169.4,377.1" fill="#fff" stroke="#fff" stroke-width="0.5"/>
<polygon points="171.45,389.25 173.5,391.3 173.5,401.4 171.45,403.45 169.4,401.4 169.4,391.3" fill="#fff" stroke="#fff" stroke-width="0.5"/>
<polygon points="154.35,403.45 156.4,401.4 169.4,401.4 171.45,403.45 169.4,405.5 156.4,405.5" fill="#fff" stroke="#fff" stroke-width="0.5"/>
<polygon points="154.35,389.25 156.4,391.3 156.4,401.4 154.35,403.45 152.3,401.4 152.3,391.3" fill="#fff" stroke="#fff" stroke-width="0.5"/>
<polygon points="154.35,375.05 156.4,377.1 156.4,387.2 154.35,389.25 152.3,387.2 152.3,377.1" fill="#fff" stroke="#fff" stroke-width="0.5"/>
<circle cx="174.1" cy="404.7" r="0.9" fill="#5a5ade"/>
<rect x="97" y="413" width="130" height="37" fill="#0000cd"/>
<polygon points="101.95,432.25 104,430.2 117,430.2 119.05,432.25 117,434.3 104,434.3" fill="#5a5ade" stroke="#5a5ade" stroke-width="0.5"/>
<polygon points="101.95,418.05 104,416 117,416 119.05,418.05 117,420.1 104,420.1" fill="#fff" stroke="#fff" stroke-width="0.5"/>
<polygon points="119.05,418.05 121.1,420.1 121.1,430.2 119.05,432.25 117,430.2 117,420.1" fill="#fff" stroke="#fff" stroke-width="0.5"/>
<polygon points="119.05,432.25 121.1,434.3 121.1,444.4 119.05,446.45 117,444.4 117,434.3" fill="#fff" stroke="#fff" stroke-width="0.5"/>
<polygon points="101.95,446.45 104,444.4 117,444.4 119.05,446.45 117,448.5 104,448.5" fill="#fff" stroke="#fff" stroke-width="0.5"/>
<polygon points="101.95,432.25 104,434.3 104,444.4 101.95,446.45 99.9,444.4 99.9,434.3" fill="#fff" stroke="#fff" stroke-width="0.5"/>
<polygon points="101.95,418.05 104,420.1 104,430.2 101.95,432.25 99.9,430.2 99.9,420.1" fill="#fff" stroke="#fff" stroke-width="0.5"/>
<circle cx="121.7" cy="447.7" r="0.9" fill="#5a5ade"/>
<polygon points="128.15,418.05 130.2,416 143.2,416 145.25,418.05 143.2,420.1 130.2,420.1" fill="#5a5ade" stroke="#5a5ade" stroke-width="0.5"/>
<polygon points="128.15,446.45 130.2,444.4 143.2,444.4 145.25,446.45 143.2,448.5 130.2,448.5" fill="#5a5ade" stroke="#5a5ade" stroke-width="0.5"/>
<polygon points="128.15,432.25 130.2,434.3 130.2,444.4 128.15,446.45 126.1,444.4 126.1,434.3" fill="#5a5ade" stroke="#5a5ade" stroke-width="0.5"/>
<polygon points="128.15,418.05 130.2,420.1 130.2,430.2 128.15,432.25 126.1,430.2 126.1,420.1" fill="#5a5ade" stroke="#5a5ade" stroke-width="0.5"/>
<polygon points="128.15,432.25 130.2,430.2 143.2,430.2 145.25,432.25 143.2,434.3 130.2,434.3" fill="#5a5ade" stroke="#5a5ade" stroke-width="0.5"/>
<polygon points="145.25,418.05 147.3,420.1 147.3,430.2 145.25,432.25 143.2,430.2 143.2,420.1" fill="#fff" stroke="#fff" stroke-width="0.5"/>
<polygon points="145.25,432.25 147.3,434.3 147.3,444.4 145.25,446.45 143.2,444.4 143.2,434.3" fill="#fff" stroke="#fff" stroke-width="0.5"/>
<circle cx="147.9" cy="447.7" r="0.9" fill="#5a5ade"/>
<polygon points="154.35,446.45 156.4,444.4 169.4,444.4 171.45,446.45 169.4,448.5 156.4,448.5" fill="#5a5ade" stroke="#5a5ade" stroke-width="0.5"/>
<polygon points="154.35,432.25 156.4,434.3 156.4,444.4 154.35,446.45 152.3,444.4 152.3,434.3" fill="#5a5ade" stroke="#5a5ade" stroke-width="0.5"/>
<polygon points="154.35,418.05 156.4,420.1 156.4,430.2 154.35,432.25 152.3,430.2 152.3,420.1" fill="#5a5ade" stroke="#5a5ade" stroke-width="0.5"/>
<polygon points="154.35,432.25 156.4,430.2 169.4,430.2 171.45,432.25 169.4,434.3 156.4,434.3" fill="#5a5ade" stroke="#5a5ade" stroke-width="0.5"/>
<polygon points="154.35,418.05 156.4,416 169.4,416 171.45,418.05 169.4,420.1 156.4,420.1" fill="#fff" stroke="#fff" stroke-width="0.5"/>
<polygon points="171.45,418.05 173.5,420.1 173.5,430.2 171.45,432.25 169.4,430.2 169.4,420.1" fill="#fff" stroke="#fff" stroke-width="0.5"/>
<polygon points="171.45,432.25 173.5,434.3 173.5,444.4 171.45,446.45 169.4,444.4 169.4,434.3" fill="#fff" stroke="#fff" stroke-width="0.5"/>
<circle cx="174.1" cy="447.7" r="0.9" fill="#5a5ade"/>
<polygon points="180.55,446.45 182.6,444.4 195.6,444.4 197.65,446.45 195.6,448.5 182.6,448.5" fill="#5a5ade" stroke="#5a5ade" stroke-width="0.5"/>
<polygon points="180.55,432.25 182.6,434.3 182.6,444.4 180.55,446.45 178.5,444.4 178.5,434.3" fill="#5a5ade" stroke="#5a5ade" stroke-width="0.5"/>
<polygon points="180.55,418.05 182.6,420.1 182.6,430.2 180.55,432.25 178.5,430.2 178.5,420.1" fill="#5a5ade" stroke="#5a5ade" stroke-width="0.5"/>
<polygon points="180.55,432.25 182.6,430.2 195.6,430.2 197.65,432.25 195.6,434.3 182.6,434.3" fill="#5a5ade" stroke="#5a5ade" stroke-width="0.5"/>
<polygon points="180.55,418.05 182.6,416 195.6,416 197.65,418.05 195.6,420.1 182.6,420.1" fill="#fff" stroke="#fff" stroke-width="0.5"/>
<polygon points="197.65,418.05 199.7,420.1 199.7,430.2 197.65,432.25 195.6,430.2 195.6,420.1" fill="#fff" stroke="#fff" stroke-width="0.5"/>
<polygon points="197.65,432.25 199.7,434.3 199.7,444.4 197.65,446.45 195.6,444.4 195.6,434.3" fill="#fff" stroke="#fff" stroke-width="0.5"/>
<rect x="199.5" y="445.6" width="3.6" height="4.4" fill="#fff" stroke="#000" stroke-width="0.6"/>
<polygon points="223.85,418.05 225.9,420.1 225.9,430.2 223.85,432.25 221.8,430.2 221.8,420.1" fill="#5a5ade" stroke="#5a5ade" stroke-width="0.5"/>
<polygon points="206.75,418.05 208.8,416 221.8,416 223.85,418.05 221.8,420.1 208.8,420.1" fill="#fff" stroke="#fff" stroke-width="0.5"/>
<polygon points="223.85,432.25 225.9,434.3 225.9,444.4 223.85,446.45 221.8,444.4 221.8,434.3" fill="#fff" stroke="#fff" stroke-width="0.5"/>
<polygon points="206.75,446.45 208.8,444.4 221.8,444.4 223.85,446.45 221.8,448.5 208.8,448.5" fill="#fff" stroke="#fff" stroke-width="0.5"/>
<polygon points="206.75,432.25 208.8,434.3 208.8,444.4 206.75,446.45 204.7,444.4 204.7,434.3" fill="#fff" stroke="#fff" stroke-width="0.5"/>
<polygon points="206.75,418.05 208.8,420.1 208.8,430.2 206.75,432.25 204.7,430.2 204.7,420.1" fill="#fff" stroke="#fff" stroke-width="0.5"/>
<polygon points="206.75,432.25 208.8,430.2 221.8,430.2 223.85,432.25 221.8,434.3 208.8,434.3" fill="#fff" stroke="#fff" stroke-width="0.5"/>
<circle cx="226.5" cy="447.7" r="0.9" fill="#5a5ade"/>
<rect x="308" y="328" width="79" height="37" fill="#0000cd"/>
<polygon points="312.95,333.05 315,331 328,331 330.05,333.05 328,335.1 315,335.1" fill="#5a5ade" stroke="#5a5ade" stroke-width="0.5"/>
<polygon points="312.95,361.45 315,359.4 328,359.4 330.05,361.45 328,363.5 315,363.5" fill="#5a5ade" stroke="#5a5ade" stroke-width="0.5"/>
<polygon points="312.95,347.25 315,349.3 315,359.4 312.95,361.45 310.9,359.4 310.9,349.3" fill="#5a5ade" stroke="#5a5ade" stroke-width="0.5"/>
<polygon points="312.95,333.05 315,335.1 315,345.2 312.95,347.25 310.9,345.2 310.9,335.1" fill="#5a5ade" stroke="#5a5ade" stroke-width="0.5"/>
<polygon points="312.95,347.25 315,345.2 328,345.2 330.05,347.25 328,349.3 315,349.3" fill="#5a5ade" stroke="#5a5ade" stroke-width="0.5"/>
<polygon points="330.05,333.05 332.1,335.1 332.1,345.2 330.05,347.25 328,345.2 328,335.1" fill="#fff" stroke="#fff" stroke-width="0.5"/>
<polygon points="330.05,347.25 332.1,349.3 332.1,359.4 330.05,361.45 328,359.4 328,349.3" fill="#fff" stroke="#fff" stroke-width="0.5"/>
<circle cx="332.7" cy="362.7" r="0.9" fill="#5a5ade"/>
<polygon points="339.15,333.05 341.2,331 354.2,331 356.25,333.05 354.2,335.1 341.2,335.1" fill="#5a5ade" stroke="#5a5ade" stroke-width="0.5"/>
<polygon points="339.15,361.45 341.2,359.4 354.2,359.4 356.25,361.45 354.2,363.5 341.2,363.5" fill="#5a5ade" stroke="#5a5ade" stroke-width="0.5"/>
<polygon points="339.15,347.25 341.2,349.3 341.2,359.4 339.15,361.45 337.1,359.4 337.1,349.3" fill="#5a5ade" stroke="#5a5ade" stroke-width="0.5"/>
<polygon points="356.25,333.05 358.3,335.1 358.3,345.2 356.25,347.25 354.2,345.2 354.2,335.1" fill="#fff" stroke="#fff" stroke-width="0.5"/>
<polygon points="356.25,347.25 358.3,349.3 358.3,359.4 356.25,361.45 354.2,359.4 354.2,349.3" fill="#fff" stroke="#fff" stroke-width="0.5"/>
<polygon points="339.15,333.05 341.2,335.1 341.2,345.2 339.15,347.25 337.1,345.2 337.1,335.1" fill="#fff" stroke="#fff" stroke-width="0.5"/>
<polygon points="339.15,347.25 341.2,345.2 354.2,345.2 356.25,347.25 354.2,349.3 341.2,349.3" fill="#fff" stroke="#fff" stroke-width="0.5"/>
<rect x="358.1" y="360.6" width="3.6" height="4.4" fill="#fff" stroke="#000" stroke-width="0.6"/>
<polygon points="382.45,333.05 384.5,335.1 384.5,345.2 382.45,347.25 380.4,345.2 380.4,335.1" fill="#5a5ade" stroke="#5a5ade" stroke-width="0.5"/>
<polygon points="365.35,347.25 367.4,349.3 367.4,359.4 365.35,361.45 363.3,359.4 363.3,349.3" fill="#5a5ade" stroke="#5a5ade" stroke-width="0.5"/>
<polygon points="365.35,333.05 367.4,331 380.4,331 382.45,333.05 380.4,335.1 367.4,335.1" fill="#fff" stroke="#fff" stroke-width="0.5"/>
<polygon points="382.45,347.25 384.5,349.3 384.5,359.4 382.45,361.45 380.4,359.4 380.4,349.3" fill="#fff" stroke="#fff" stroke-width="0.5"/>
<polygon points="365.35,361.45 367.4,359.4 380.4,359.4 382.45,361.45 380.4,363.5 367.4,363.5" fill="#fff" stroke="#fff" stroke-width="0.5"/>
<polygon points="365.35,333.05 367.4,335.1 367.4,345.2 365.35,347.25 363.3,345.2 363.3,335.1" fill="#fff" stroke="#fff" stroke-width="0.5"/>
<polygon points="365.35,347.25 367.4,345.2 380.4,345.2 382.45,347.25 380.4,349.3 367.4,349.3" fill="#fff" stroke="#fff" stroke-width="0.5"/>
<circle cx="385.1" cy="362.7" r="0.9" fill="#5a5ade"/>
<rect x="308" y="370" width="79" height="37" fill="#0000cd"/>
<polygon points="312.95,389.25 315,387.2 328,387.2 330.05,389.25 328,391.3 315,391.3" fill="#5a5ade" stroke="#5a5ade" stroke-width="0.5"/>
<polygon points="312.95,375.05 315,373 328,373 330.05,375.05 328,377.1 315,377.1" fill="#fff" stroke="#fff" stroke-width="0.5"/>
<polygon points="330.05,375.05 332.1,377.1 332.1,387.2 330.05,389.25 328,387.2 328,377.1" fill="#fff" stroke="#fff" stroke-width="0.5"/>
<polygon points="330.05,389.25 332.1,391.3 332.1,401.4 330.05,403.45 328,401.4 328,391.3" fill="#fff" stroke="#fff" stroke-width="0.5"/>
<polygon points="312.95,403.45 315,401.4 328,401.4 330.05,403.45 328,405.5 315,405.5" fill="#fff" stroke="#fff" stroke-width="0.5"/>
<polygon points="312.95,389.25 315,391.3 315,401.4 312.95,403.45 310.9,401.4 310.9,391.3" fill="#fff" stroke="#fff" stroke-width="0.5"/>
<polygon points="312.95,375.05 315,377.1 315,387.2 312.95,389.25 310.9,387.2 310.9,377.1" fill="#fff" stroke="#fff" stroke-width="0.5"/>
<circle cx="332.7" cy="404.7" r="0.9" fill="#5a5ade"/>
<polygon points="339.15,389.25 341.2,387.2 354.2,387.2 356.25,389.25 354.2,391.3 341.2,391.3" fill="#5a5ade" stroke="#5a5ade" stroke-width="0.5"/>
<polygon points="339.15,375.05 341.2,373 354.2,373 356.25,375.05 354.2,377.1 341.2,377.1" fill="#fff" stroke="#fff" stroke-width="0.5"/>
<polygon points="356.25,375.05 358.3,377.1 358.3,387.2 356.25,389.25 354.2,387.2 354.2,377.1" fill="#fff" stroke="#fff" stroke-width="0.5"/>
<polygon points="356.25,389.25 358.3,391.3 358.3,401.4 356.25,403.45 354.2,401.4 354.2,391.3" fill="#fff" stroke="#fff" stroke-width="0.5"/>
<polygon points="339.15,403.45 341.2,401.4 354.2,401.4 356.25,403.45 354.2,405.5 341.2,405.5" fill="#fff" stroke="#fff" stroke-width="0.5"/>
<polygon points="339.15,389.25 341.2,391.3 341.2,401.4 339.15,403.45 337.1,401.4 337.1,391.3" fill="#fff" stroke="#fff" stroke-width="0.5"/>
<polygon points="339.15,375.05 341.2,377.1 341.2,387.2 339.15,389.25 337.1,387.2 337.1,377.1" fill="#fff" stroke="#fff" stroke-width="0.5"/>
<rect x="358.1" y="402.6" width="3.6" height="4.4" fill="#fff" stroke="#000" stroke-width="0.6"/>
<polygon points="382.45,389.25 384.5,391.3 384.5,401.4 382.45,403.45 380.4,401.4 380.4,391.3" fill="#5a5ade" stroke="#5a5ade" stroke-width="0.5"/>
<polygon points="365.35,375.05 367.4,377.1 367.4,387.2 365.35,389.25 363.3,387.2 363.3,377.1" fill="#5a5ade" stroke="#5a5ade" stroke-width="0.5"/>
<polygon points="365.35,375.05 367.4,373 380.4,373 382.45,375.05 380.4,377.1 367.4,377.1" fill="#fff" stroke="#fff" stroke-width="0.5"/>
<polygon points="382.45,375.05 384.5,377.1 384.5,387.2 382.45,389.25 380.4,387.2 380.4,377.1" fill="#fff" stroke="#fff" stroke-width="0.5"/>
<polygon points="365.35,403.45 367.4,401.4 380.4,401.4 382.45,403.45 380.4,405.5 367.4,405.5" fill="#fff" stroke="#fff" stroke-width="0.5"/>
<polygon points="365.35,389.25 367.4,391.3 367.4,401.4 365.35,403.45 363.3,401.4 363.3,391.3" fill="#fff" stroke="#fff" stroke-width="0.5"/>
<polygon points="365.35,389.25 367.4,387.2 380.4,387.2 382.45,389.25 380.4,391.3 367.4,391.3" fill="#fff" stroke="#fff" stroke-width="0.5"/>
<circle cx="385.1" cy="404.7" r="0.9" fill="#5a5ade"/>
<rect x="308" y="413" width="79" height="37" fill="#0000cd"/>
<polygon points="312.95,432.25 315,430.2 328,430.2 330.05,432.25 328,434.3 315,434.3" fill="#5a5ade" stroke="#5a5ade" stroke-width="0.5"/>
<polygon points="312.95,418.05 315,416 328,416 330.05,418.05 328,420.1 315,420.1" fill="#fff" stroke="#fff" stroke-width="0.5"/>
<polygon points="330.05,418.05 332.1,420.1 332.1,430.2 330.05,432.25 328,430.2 328,420.1" fill="#fff" stroke="#fff" stroke-width="0.5"/>
<polygon points="330.05,432.25 332.1,434.3 332.1,444.4 330.05,446.45 328,444.4 328,434.3" fill="#fff" stroke="#fff" stroke-width="0.5"/>
<polygon points="312.95,446.45 315,444.4 328,444.4 330.05,446.45 328,448.5 315,448.5" fill="#fff" stroke="#fff" stroke-width="0.5"/>
<polygon points="312.95,432.25 315,434.3 315,444.4 312.95,446.45 310.9,444.4 310.9,434.3" fill="#fff" stroke="#fff" stroke-width="0.5"/>
<polygon points="312.95,418.05 315,420.1 315,430.2 312.95,432.25 310.9,430.2 310.9,420.1" fill="#fff" stroke="#fff" stroke-width="0.5"/>
<circle cx="332.7" cy="447.7" r="0.9" fill="#5a5ade"/>
<polygon points="339.15,432.25 341.2,430.2 354.2,430.2 356.25,432.25 354.2,434.3 341.2,434.3" fill="#5a5ade" stroke="#5a5ade" stroke-width="0.5"/>
<polygon points="339.15,418.05 341.2,416 354.2,416 356.25,418.05 354.2,420.1 341.2,420.1" fill="#fff" stroke="#fff" stroke-width="0.5"/>
<polygon points="356.25,418.05 358.3,420.1 358.3,430.2 356.25,432.25 354.2,430.2 354.2,420.1" fill="#fff" stroke="#fff" stroke-width="0.5"/>
<polygon points="356.25,432.25 358.3,434.3 358.3,444.4 356.25,446.45 354.2,444.4 354.2,434.3" fill="#fff" stroke="#fff" stroke-width="0.5"/>
<polygon points="339.15,446.45 341.2,444.4 354.2,444.4 356.25,446.45 354.2,448.5 341.2,448.5" fill="#fff" stroke="#fff" stroke-width="0.5"/>
<polygon points="339.15,432.25 341.2,434.3 341.2,444.4 339.15,446.45 337.1,444.4 337.1,434.3" fill="#fff" stroke="#fff" stroke-width="0.5"/>
<polygon points="339.15,418.05 341.2,420.1 341.2,430.2 339.15,432.25 337.1,430.2 337.1,420.1" fill="#fff" stroke="#fff" stroke-width="0.5"/>
<circle cx="358.9" cy="447.7" r="0.9" fill="#5a5ade"/>
<polygon points="382.45,432.25 384.5,434.3 384.5,444.4 382.45,446.45 380.4,444.4 380.4,434.3" fill="#5a5ade" stroke="#5a5ade" stroke-width="0.5"/>
<polygon points="365.35,418.05 367.4,420.1 367.4,430.2 365.35,432.25 363.3,430.2 363.3,420.1" fill="#5a5ade" stroke="#5a5ade" stroke-width="0.5"/>
<polygon points="365.35,418.05 367.4,416 380.4,416 382.45,418.05 380.4,420.1 367.4,420.1" fill="#fff" stroke="#fff" stroke-width="0.5"/>
<polygon points="382.45,418.05 384.5,420.1 384.5,430.2 382.45,432.25 380.4,430.2 380.4,420.1" fill="#fff" stroke="#fff" stroke-width="0.5"/>
<polygon points="365.35,446.45 367.4,444.4 380.4,444.4 382.45,446.45 380.4,448.5 367.4,448.5" fill="#fff" stroke="#fff" stroke-width="0.5"/>
<polygon points="365.35,432.25 367.4,434.3 367.4,444.4 365.35,446.45 363.3,444.4 363.3,434.3" fill="#fff" stroke="#fff" stroke-width="0.5"/>
<polygon points="365.35,432.25 367.4,430.2 380.4,430.2 382.45,432.25 380.4,434.3 367.4,434.3" fill="#fff" stroke="#fff" stroke-width="0.5"/>
<circle cx="385.1" cy="447.7" r="0.9" fill="#5a5ade"/>
<defs><linearGradient id="l1" x1="0" y1="0" x2="1" y2="1"><stop offset="0" stop-color="#ff1010"/><stop offset="1" stop-color="#b00000"/></linearGradient></defs><circle cx="435.5" cy="340" r="12.5" fill="url(#l1)"/>
<defs><linearGradient id="l2" x1="0" y1="0" x2="1" y2="1"><stop offset="0" stop-color="#ffff10"/><stop offset="1" stop-color="#b0a800"/></linearGradient></defs><circle cx="435.5" cy="370" r="12.5" fill="url(#l2)"/>
<defs><linearGradient id="l3" x1="0" y1="0" x2="1" y2="1"><stop offset="0" stop-color="#808080"/><stop offset="1" stop-color="#404040"/></linearGradient></defs><circle cx="435.5" cy="407.5" r="12.5" fill="url(#l3)"/>
<defs><linearGradient id="l4" x1="0" y1="0" x2="1" y2="1"><stop offset="0" stop-color="#808080"/><stop offset="1" stop-color="#404040"/></linearGradient></defs><circle cx="435.5" cy="438" r="12.5" fill="url(#l4)"/>
<defs><linearGradient id="l5" x1="0" y1="0" x2="1" y2="1"><stop offset="0" stop-color="#ff1010"/><stop offset="1" stop-color="#b00000"/></linearGradient></defs><circle cx="556" cy="439.4" r="5.5" fill="url(#l5)"/>
</svg>
<div class="lb" style="right:715px;top:339.5px;font-size:12px;font-weight:bold;"><span>Power Supply</span></div>
<div class="lb" style="right:715px;top:381px;font-size:12px;font-weight:bold;"><span>Battery Volts</span></div>
<div class="lb" style="right:715px;top:423px;font-size:12px;font-weight:bold;"><span>Run Hours</span></div>
<div class="lb" style="right:505px;top:339.5px;font-size:12px;font-weight:bold;"><span>Analog 1 Volts</span></div>
<div class="lb" style="right:505px;top:381px;font-size:12px;font-weight:bold;"><span>Analog 2 Volts</span></div>
<div class="lb" style="right:505px;top:423px;font-size:12px;font-weight:bold;"><span>Exercise</span></div>
<div class="tx" style="left:458px;top:335px;font-size:12px"><span>Fault!!</span></div>
<div class="tx" style="left:458px;top:364px;font-size:12px"><span>Power Failure - Load On Generator</span></div>
<div class="tx" style="left:458px;top:401px;font-size:12px"><span>Relay 1 Open</span></div>
<div class="tx" style="left:458px;top:433px;font-size:12px"><span>Relay 2 Open</span></div>
<div class="tx" style="left:572px;top:433px;font-size:12px"><span>Comm Heartbeat</span></div>
<div class="grp" style="left:7px;top:462px;width:326px;height:93px"></div>
<div class="gt" style="left:14px;top:457px;width:65px"><span>Fault Register</span></div>
<div class="cell" style="left:11px;top:470px;background:#ff0000"><span>Digital 1</span></div>
<div class="cell" style="left:91px;top:470px;background:#000"><span>Digital 2</span></div>
<div class="cell" style="left:171px;top:470px;background:#000"><span>Digital 3</span></div>
<div class="cell" style="left:251px;top:470px;background:#000"><span>Digital 4</span></div>
<div class="cell" style="left:11px;top:491px;background:#000"><span>Analog 1 Low</span></div>
<div class="cell" style="left:91px;top:491px;background:#000"><span>Analog 1 High</span></div>
<div class="cell" style="left:171px;top:491px;background:#000"><span>Analog 2 Low</span></div>
<div class="cell" style="left:251px;top:491px;background:#000"><span>Analog 2 High</span></div>
<div class="cell" style="left:11px;top:512px;background:#000"><span>Battery Fail</span></div>
<div class="cell" style="left:91px;top:512px;background:#000"><span>Exercise Fail</span></div>
<div class="cell" style="left:171px;top:512px;background:#000"><span>Fail to XFER</span></div>
<div class="cell" style="left:251px;top:512px;background:#000"><span>Power Fail</span></div>
<div class="cell" style="left:11px;top:533px;background:#000"><span>Util Freq</span></div>
<div class="cell" style="left:91px;top:533px;background:#ff0000"><span>Util AC Volts</span></div>
<div class="cell" style="left:171px;top:533px;background:#000"><span>Gen Freq</span></div>
<div class="cell" style="left:251px;top:533px;background:#000"><span>Gen AC Volts</span></div>
<div class="grp" style="left:342px;top:462px;width:326px;height:93px"></div>
<div class="gt" style="left:349px;top:457px;width:72px"><span>Status Register</span></div>
<div class="cell" style="left:346px;top:470px;background:#008000"><span>Digital 1</span></div>
<div class="cell" style="left:426px;top:470px;background:#008000"><span>Digital 2</span></div>
<div class="cell" style="left:506px;top:470px;background:#008000"><span>Digital 3</span></div>
<div class="cell" style="left:586px;top:470px;background:#008000"><span>Digital 4</span></div>
<div class="cell" style="left:346px;top:491px;background:#000"><span>Gen Stopped</span></div>
<div class="cell" style="left:426px;top:491px;background:#008000"><span>Gen Started</span></div>
<div class="cell" style="left:506px;top:491px;background:#000"><span>Relay 1</span></div>
<div class="cell" style="left:586px;top:491px;background:#000"><span>Relay 2</span></div>
<div class="cell" style="left:346px;top:512px;background:#000"><span>Util Restored</span></div>
<div class="cell" style="left:426px;top:512px;background:#008000"><span>Exercise Pass</span></div>
<div class="cell" style="left:506px;top:512px;background:#000"><span>Exercising</span></div>
<div class="cell" style="left:586px;top:512px;background:#008000"><span>Load Side OK</span></div>
<div class="cell" style="left:346px;top:533px;background:#000"><span>Util Freq</span></div>
<div class="cell" style="left:426px;top:533px;background:#000"><span>Utility OK</span></div>
<div class="cell" style="left:506px;top:533px;background:#008000"><span>Gen Freq</span></div>
<div class="cell" style="left:586px;top:533px;background:#008000"><span>Gen OK</span></div>
</body></html>
